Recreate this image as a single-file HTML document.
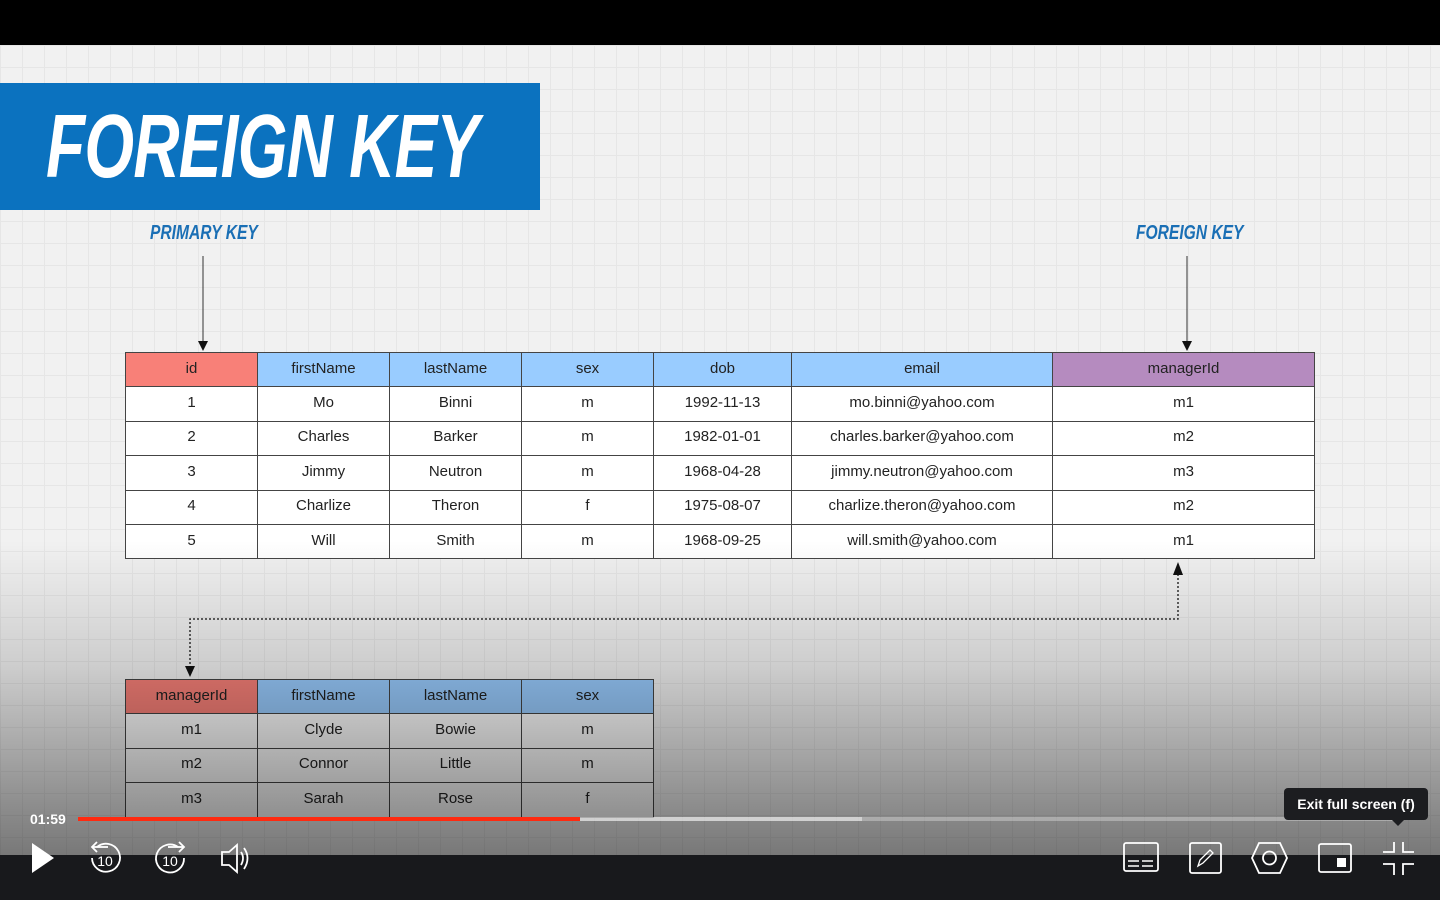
<!DOCTYPE html>
<html><head><meta charset="utf-8"><style>
*{margin:0;padding:0;box-sizing:border-box}
body{width:1440px;height:900px;overflow:hidden;position:relative;background:#efefef;font-family:"Liberation Sans",sans-serif}
.grid{position:absolute;left:0;top:45px;width:1440px;height:810px;background-color:#f1f1f1;
background-image:linear-gradient(#e6e6e6 1px,transparent 1px),linear-gradient(90deg,#e6e6e6 1px,transparent 1px);background-size:22px 22px}
.top{position:absolute;left:0;top:0;width:1440px;height:45px;background:#000}
.title{position:absolute;left:0;top:83px;width:540px;height:127px;background:#0b72bf}
.title span{position:absolute;left:46px;top:9px;font:italic bold 90px/110px "Liberation Sans",sans-serif;color:#fff;transform:scaleX(.71);transform-origin:0 0;white-space:nowrap;letter-spacing:-1px}
.lbl{position:absolute;font:italic bold 20px "Liberation Sans",sans-serif;color:#1a6fb5;transform:scaleX(.78);transform-origin:0 0;white-space:nowrap}
table{position:absolute;border-collapse:collapse;table-layout:fixed}
td{border:1.5px solid #444;text-align:center;font-size:15px;line-height:15px;color:#222;height:34.4px;background:#fff;padding:0 0 3px}
.h td{background:#99ccff}
td.r{background:#f88078!important}
td.p{background:#b58bbf!important}
.shade{position:absolute;left:0;top:540px;width:1440px;height:315px;background:linear-gradient(rgba(0,0,0,0),rgba(0,0,0,.15) 40%,rgba(0,0,0,.42) 85%,rgba(0,0,0,.5))}
.bar{position:absolute;left:0;top:855px;width:1440px;height:45px;background:#18191c}
.time{position:absolute;left:30px;top:811px;color:#fff;font-size:14px;font-weight:bold}
.tip{position:absolute;left:1284px;top:788px;width:144px;height:32px;background:#1c1d20;border-radius:4px;color:#fff;font-size:14px;font-weight:bold;text-align:center;line-height:32px}
</style></head><body>
<div class="grid"></div>
<div class="top"></div>
<div class="title"><span>FOREIGN KEY</span></div>
<div class="lbl" style="left:150px;top:222px">PRIMARY KEY</div>
<div class="lbl" style="left:1136px;top:222px">FOREIGN KEY</div>
<svg style="position:absolute;left:0;top:0" width="1440" height="900">
<line x1="203" y1="256" x2="203" y2="342" stroke="#333" stroke-width="1"/>
<polygon points="198,341 208,341 203,351" fill="#111"/>
<line x1="1187" y1="256" x2="1187" y2="342" stroke="#333" stroke-width="1"/>
<polygon points="1182,341 1192,341 1187,351" fill="#111"/>
<polyline points="190,668 190,619 1178,619 1178,574" fill="none" stroke="#333" stroke-width="1.5" stroke-dasharray="2,2"/>
<polygon points="1173,575 1183,575 1178,562" fill="#111"/>
<polygon points="185,666 195,666 190,677" fill="#111"/>
</svg>
<table style="left:125px;top:352px;width:1189px">
<colgroup><col style="width:132px"><col style="width:132px"><col style="width:132px"><col style="width:132px"><col style="width:138px"><col style="width:261px"><col style="width:262px"></colgroup>
<tr class="h"><td class="r">id</td><td>firstName</td><td>lastName</td><td>sex</td><td>dob</td><td>email</td><td class="p">managerId</td></tr>
<tr><td>1</td><td>Mo</td><td>Binni</td><td>m</td><td>1992-11-13</td><td>mo.binni@yahoo.com</td><td>m1</td></tr>
<tr><td>2</td><td>Charles</td><td>Barker</td><td>m</td><td>1982-01-01</td><td>charles.barker@yahoo.com</td><td>m2</td></tr>
<tr><td>3</td><td>Jimmy</td><td>Neutron</td><td>m</td><td>1968-04-28</td><td>jimmy.neutron@yahoo.com</td><td>m3</td></tr>
<tr><td>4</td><td>Charlize</td><td>Theron</td><td>f</td><td>1975-08-07</td><td>charlize.theron@yahoo.com</td><td>m2</td></tr>
<tr><td>5</td><td>Will</td><td>Smith</td><td>m</td><td>1968-09-25</td><td>will.smith@yahoo.com</td><td>m1</td></tr>
</table>
<table style="left:125px;top:679px;width:528px">
<colgroup><col style="width:132px"><col style="width:132px"><col style="width:132px"><col style="width:132px"></colgroup>
<tr class="h"><td class="r">managerId</td><td>firstName</td><td>lastName</td><td>sex</td></tr>
<tr><td>m1</td><td>Clyde</td><td>Bowie</td><td>m</td></tr>
<tr><td>m2</td><td>Connor</td><td>Little</td><td>m</td></tr>
<tr><td>m3</td><td>Sarah</td><td>Rose</td><td>f</td></tr>
</table>
<div class="shade"></div>
<div class="bar"></div>
<div style="position:absolute;left:78px;top:817px;width:1322px;height:4px;background:rgba(255,255,255,.3)"></div>
<div style="position:absolute;left:78px;top:817px;width:784px;height:4px;background:rgba(255,255,255,.45)"></div>
<div style="position:absolute;left:78px;top:817px;width:502px;height:4px;background:#ff2a10"></div>
<div class="time">01:59</div>
<div class="tip">Exit full screen (f)</div>
<svg style="position:absolute;left:0;top:0" width="1440" height="900" fill="none" stroke="#fff" stroke-width="1.8">
<polygon points="32,843 54,858 32,873" fill="#fff" stroke="none"/>
<path d="M97,847 A14,14 0 1 1 92,858"/><path d="M93,847 H108"/><path d="M97,842 L92,847 L97,852"/>
<text x="105" y="866" font-size="14" fill="#fff" stroke="none" text-anchor="middle" font-family="Liberation Sans">10</text>
<path d="M178,847 A14,14 0 1 0 184,858"/><path d="M168,847 H184"/><path d="M179,842 L184,847 L179,852"/>
<text x="170" y="866" font-size="14" fill="#fff" stroke="none" text-anchor="middle" font-family="Liberation Sans">10</text>
<path d="M222,852 H229 L237,845 V872 L229,865 H222 Z"/><path d="M241,852 Q245,858 241,865"/><path d="M244,848 Q251,858 244,869"/>
<rect x="1124" y="843" width="34" height="28" rx="2"/><path d="M1128,861 H1139 M1142,861 H1153 M1128,866 H1139 M1142,866 H1153" stroke-width="1.5"/>
<rect x="1190" y="843" width="31" height="30" rx="2"/><path d="M1198,866 L1200,860 L1210,850 L1213,853 L1203,863 Z" stroke-width="1.3"/>
<polygon points="1259,843 1280,843 1287,858 1280,873 1259,873 1252,858"/><circle cx="1269.5" cy="858" r="6.5"/>
<rect x="1319" y="844" width="32" height="28" rx="2"/><rect x="1337" y="858" width="9" height="9" fill="#fff" stroke="none"/>
<path d="M1394,842 V852 H1383 M1403,842 V852 H1414 M1383,864 H1394 V875 M1414,864 H1403 V875"/>
<polygon points="1392,820 1404,820 1398,826" fill="#1c1d20" stroke="none"/>
</svg>
</body></html>
